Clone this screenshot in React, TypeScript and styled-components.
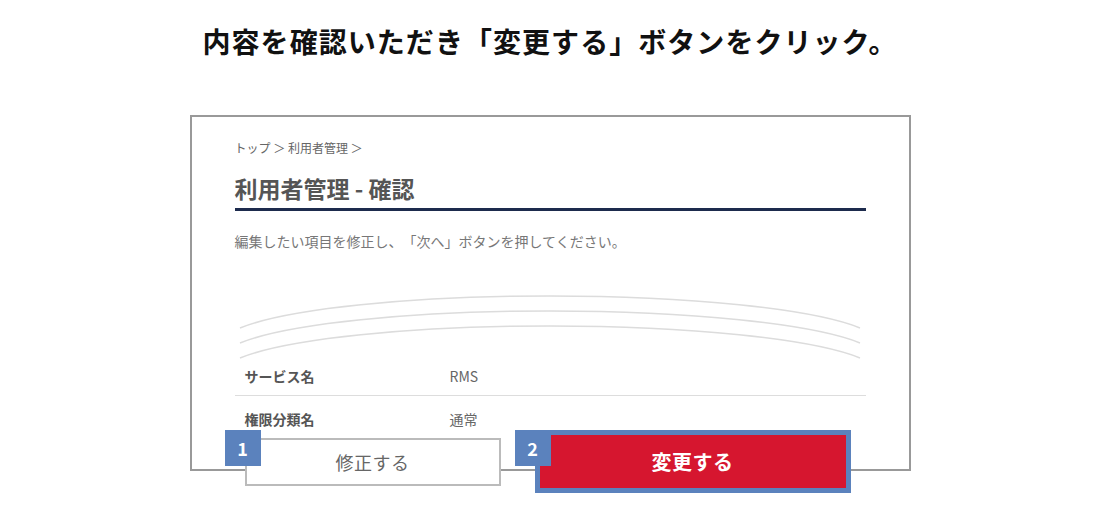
import React from "react";
import styled, { createGlobalStyle } from "styled-components";

const GlobalStyle = createGlobalStyle`
  html, body { margin: 0; padding: 0; background: #fff; }
  body { font-family: "Noto Sans CJK JP", "Noto Sans", sans-serif; text-spacing-trim: space-all; }
  * { box-sizing: border-box; }
`;

const Page = styled.div`
  width: 1100px;
  height: 530px;
  display: flex;
  flex-direction: column;
  align-items: center;
  padding-top: 22px;
  overflow: hidden;
`;

const Title = styled.h1`
  margin: 0;
  font-size: 28px;
  line-height: 39px;
  font-weight: 700;
  letter-spacing: 1.05px;
  color: #111;
`;

const Stage = styled.div`
  width: 721px;
  margin-top: 54px;
  display: flex;
  flex-direction: column;
`;

const Frame = styled.div`
  height: 356px;
  border: 2px solid #999;
  overflow: hidden;
  padding: 22px 43px 0;
  display: flex;
  flex-direction: column;
  background: #fff;
`;

const Breadcrumb = styled.div`
  font-size: 12px;
  line-height: 18px;
  color: #666;
`;

const Heading = styled.h2`
  margin: 15px 0 0;
  font-size: 23px;
  line-height: 32px;
  font-weight: 700;
  color: #555;
  padding-bottom: 4px;
  border-bottom: 3px solid #1d2b4d;
`;

const Lead = styled.p`
  margin: 20px 0 0;
  font-size: 14px;
  line-height: 21px;
  color: #777;
`;

const Tear = styled.svg`
  display: block;
  margin-top: 43px;
  width: 631px;
  height: 58px;
  overflow: visible;
`;

const Table = styled.div`
  display: flex;
  flex-direction: column;
`;

const Row = styled.div`
  display: grid;
  grid-template-columns: 205px 1fr;
  padding: 13px 10px 8px;
  border-bottom: 1px solid #ddd;
  font-size: 14px;
  line-height: 21px;

  &:last-child {
    border-bottom: none;
  }
`;

const Label = styled.div`
  font-weight: 700;
  color: #555;
`;

const Value = styled.div`
  color: #666;
`;

const Actions = styled.div`
  display: flex;
  align-items: flex-start;
  gap: 14px;
  margin-top: -41px;
  padding-left: 35px;
  position: relative;
  z-index: 1;
`;

const Step = styled.div`
  position: relative;
  display: flex;
  padding-left: 20px;
`;

const Badge = styled.span`
  position: absolute;
  left: 0;
  top: 0;
  width: 36px;
  height: 36px;
  background: #5b82bd;
  color: #fff;
  font-size: 18px;
  font-weight: 700;
  display: flex;
  align-items: center;
  justify-content: center;
  z-index: 2;
`;

const Button = styled.button<{ $primary?: boolean }>`
  font-family: "Noto Sans CJK JP", "Noto Sans", sans-serif;
  display: flex;
  align-items: center;
  justify-content: center;
  cursor: pointer;
  padding: 0;
  margin-top: ${(p) => (p.$primary ? "0" : "8px")};
  width: ${(p) => (p.$primary ? "316px" : "256px")};
  height: ${(p) => (p.$primary ? "63px" : "48px")};
  background: ${(p) => (p.$primary ? "#d6162f" : "#fff")};
  border: ${(p) => (p.$primary ? "5px solid #5b82bd" : "2px solid #bbb")};
  color: ${(p) => (p.$primary ? "#fff" : "#666")};
  font-size: ${(p) => (p.$primary ? "20px" : "18px")};
  font-weight: ${(p) => (p.$primary ? 700 : 400)};
  letter-spacing: 0.5px;
`;

const arcs = [0, 15, 30];

export default function App() {
  return (
    <>
      <GlobalStyle />
      <Page>
        <Title>内容を確認いただき「変更する」ボタンをクリック。</Title>
        <Stage>
          <Frame>
            <Breadcrumb>トップ ＞ 利用者管理 ＞</Breadcrumb>
            <Heading>利用者管理 - 確認</Heading>
            <Lead>編集したい項目を修正し、「次へ」ボタンを押してください。</Lead>
            <Tear viewBox="0 0 631 58">
              {arcs.map((o) => (
                <path
                  key={o}
                  d={`M5 ${33 + o} A330 48.7 0 0 1 625 ${33 + o}`}
                  fill="none"
                  stroke="#dcdcdc"
                  strokeWidth={1.5}
                />
              ))}
            </Tear>
            <Table>
              <Row>
                <Label>サービス名</Label>
                <Value>RMS</Value>
              </Row>
              <Row>
                <Label>権限分類名</Label>
                <Value>通常</Value>
              </Row>
            </Table>
          </Frame>
          <Actions>
            <Step>
              <Badge>1</Badge>
              <Button>修正する</Button>
            </Step>
            <Step>
              <Badge>2</Badge>
              <Button $primary>変更する</Button>
            </Step>
          </Actions>
        </Stage>
      </Page>
    </>
  );
}
